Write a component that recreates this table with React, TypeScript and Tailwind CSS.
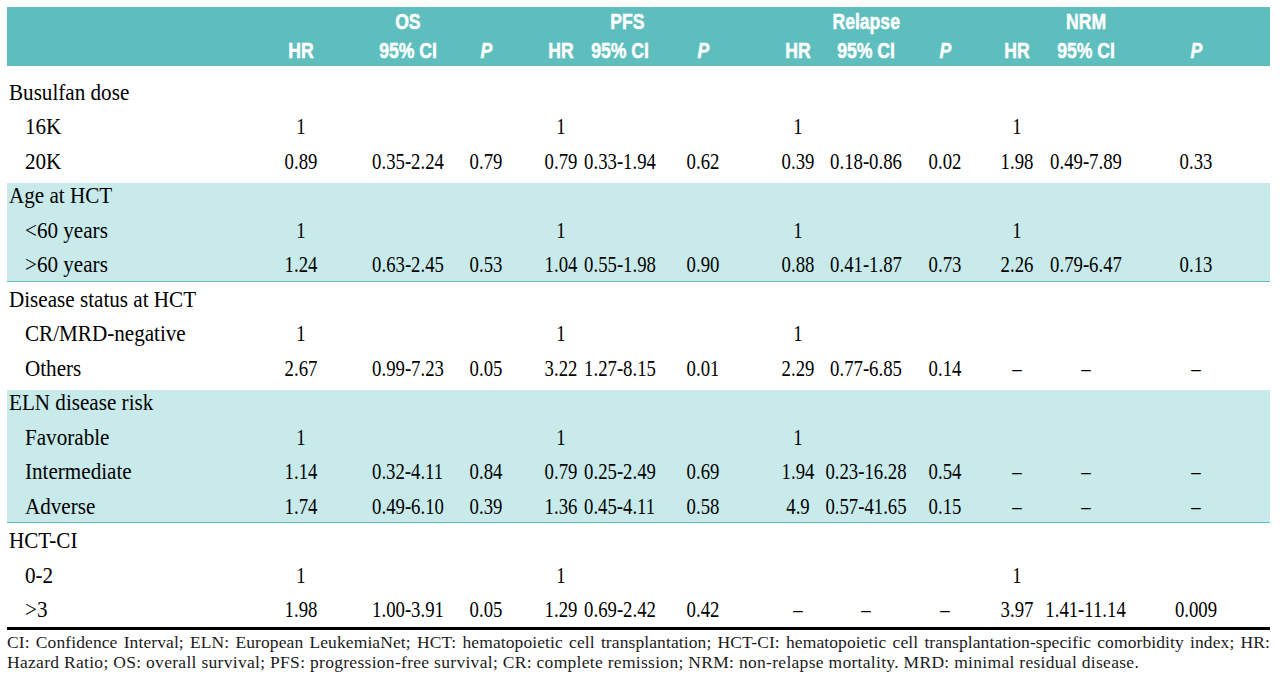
import React from "react";

const COLS =
  "grid grid-cols-[274px_40px_67px_40px_38px_40px_35px_40px_19px_40px_43px_40px_55px_40px_28px_40px_39px_40px_32px_40px_29px_40px_70px_40px_1fr]";

type RowData = { label: string; sub?: boolean; vals?: string[] };

type Group = { band: boolean; rows: RowData[] };

const D = "–";

const groups: Group[] = [
  {
    band: false,
    rows: [
      { label: "Busulfan dose" },
      { label: "16K", sub: true, vals: ["1", "", "", "1", "", "", "1", "", "", "1", "", ""] },
      {
        label: "20K",
        sub: true,
        vals: ["0.89", "0.35-2.24", "0.79", "0.79", "0.33-1.94", "0.62", "0.39", "0.18-0.86", "0.02", "1.98", "0.49-7.89", "0.33"],
      },
    ],
  },
  {
    band: true,
    rows: [
      { label: "Age at HCT" },
      { label: "<60 years", sub: true, vals: ["1", "", "", "1", "", "", "1", "", "", "1", "", ""] },
      {
        label: ">60 years",
        sub: true,
        vals: ["1.24", "0.63-2.45", "0.53", "1.04", "0.55-1.98", "0.90", "0.88", "0.41-1.87", "0.73", "2.26", "0.79-6.47", "0.13"],
      },
    ],
  },
  {
    band: false,
    rows: [
      { label: "Disease status at HCT" },
      { label: "CR/MRD-negative", sub: true, vals: ["1", "", "", "1", "", "", "1", "", "", "", "", ""] },
      {
        label: "Others",
        sub: true,
        vals: ["2.67", "0.99-7.23", "0.05", "3.22", "1.27-8.15", "0.01", "2.29", "0.77-6.85", "0.14", D, D, D],
      },
    ],
  },
  {
    band: true,
    rows: [
      { label: "ELN disease risk" },
      { label: "Favorable", sub: true, vals: ["1", "", "", "1", "", "", "1", "", "", "", "", ""] },
      {
        label: "Intermediate",
        sub: true,
        vals: ["1.14", "0.32-4.11", "0.84", "0.79", "0.25-2.49", "0.69", "1.94", "0.23-16.28", "0.54", D, D, D],
      },
      {
        label: "Adverse",
        sub: true,
        vals: ["1.74", "0.49-6.10", "0.39", "1.36", "0.45-4.11", "0.58", "4.9", "0.57-41.65", "0.15", D, D, D],
      },
    ],
  },
  {
    band: false,
    rows: [
      { label: "HCT-CI" },
      { label: "0-2", sub: true, vals: ["1", "", "", "1", "", "", "", "", "", "1", "", ""] },
      {
        label: ">3",
        sub: true,
        vals: ["1.98", "1.00-3.91", "0.05", "1.29", "0.69-2.42", "0.42", D, D, D, "3.97", "1.41-11.14", "0.009"],
      },
    ],
  },
];

function Row({ r }: { r: RowData }) {
  const vals = r.vals ?? Array(12).fill("");
  return (
    <div className={`${COLS} h-[34.5px] leading-[34.5px]`}>
      <div className={r.sub ? "pl-[18px]" : "pl-[2px]"}>
        <span className="inline-block origin-left scale-x-[0.88] whitespace-nowrap">{r.label}</span>
      </div>
      {vals.map((v, i) => (
        <React.Fragment key={i}>
          <div className="flex justify-center">
            <span className="inline-block scale-x-[0.78] whitespace-nowrap">{v}</span>
          </div>
          <div />
        </React.Fragment>
      ))}
    </div>
  );
}

function HCell({ children, italic, extra }: { children?: React.ReactNode; italic?: boolean; extra?: string }) {
  return (
    <div className={`flex justify-center ${extra ?? ""}`}>
      <span className={`inline-block scale-x-[0.8] whitespace-nowrap ${italic ? "italic" : ""}`}>{children}</span>
    </div>
  );
}

export default function App() {
  const top: (string | null)[] = [null, "OS", null, null, "PFS", null, null, "Relapse", null, null, "NRM", null];
  const sub = ["HR", "95% CI", "P", "HR", "95% CI", "P", "HR", "95% CI", "P", "HR", "95% CI", "P"];
  return (
    <div className="w-[1280px] h-[682px] bg-white pt-[7px] pl-[7px] pr-[10px] overflow-hidden">
      {/* header */}
      <div className="bg-[#5ebebe] text-white font-['Liberation_Sans',sans-serif] font-bold text-[22px] leading-[29px] pb-[1px] [-webkit-text-stroke:0.5px_#ffffff]">
        <div className={COLS}>
          <div />
          {top.map((t, i) => (
            <React.Fragment key={i}>
              <HCell extra={t === "PFS" ? "pl-[14px]" : ""}>{t ?? ""}</HCell>
              <div />
            </React.Fragment>
          ))}
        </div>
        <div className={COLS}>
          <div />
          {sub.map((t, i) => (
            <React.Fragment key={i}>
              <HCell italic={t === "P"}>{t}</HCell>
              <div />
            </React.Fragment>
          ))}
        </div>
      </div>

      {/* body */}
      <div className="pt-[8.75px] font-['Liberation_Serif',serif] text-[24px] text-black">
        {groups.map((g, gi) => (
          <div
            key={gi}
            className={
              g.band
                ? "bg-[linear-gradient(to_bottom,#ffffff_5px,#c8eaea_5px)] shadow-[inset_0_-1px_0_#5ebebe]"
                : ""
            }
          >
            {g.rows.map((r, ri) => (
              <Row key={ri} r={r} />
            ))}
          </div>
        ))}
      </div>

      <div className="h-[3px] bg-black" />

      {/* footnote */}
      <div className="mt-[2px] font-['Liberation_Serif',serif] text-[17.5px] leading-[20px] text-[#1a1a1a]">
        <div className="text-justify [text-align-last:justify] tracking-[0.1px]">
          CI: Confidence Interval; ELN: European LeukemiaNet; HCT: hematopoietic cell transplantation; HCT-CI: hematopoietic cell transplantation-specific comorbidity index; HR:
        </div>
        <div className="tracking-[0.3px]">
          Hazard Ratio; OS: overall survival; PFS: progression-free survival; CR: complete remission; NRM: non-relapse mortality. MRD: minimal residual disease.
        </div>
      </div>
    </div>
  );
}
